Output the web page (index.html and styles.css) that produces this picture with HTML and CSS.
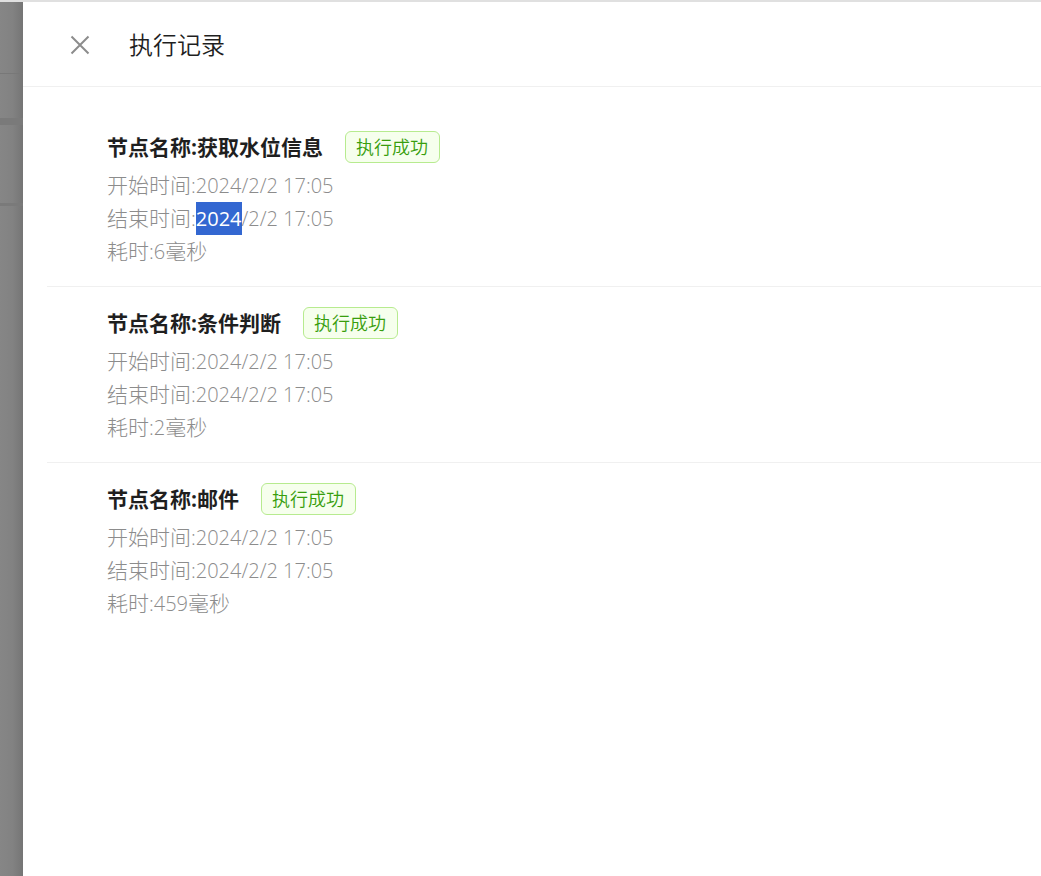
FILE: index.html
```html
<!DOCTYPE html>
<html lang="zh-CN">
<head>
<meta charset="utf-8">
<meta name="viewport" content="width=device-width, initial-scale=1">
<title>执行记录</title>
<link rel="stylesheet" href="styles.css">
</head>
<body>
<div class="screen">
  <div class="backdrop">
    <div class="backdrop-header"></div>
    <div class="backdrop-toolbar"></div>
    <div class="backdrop-row"></div>
  </div>
  <main class="drawer">
    <header class="drawer-header">
      <button class="close" type="button" aria-label="关闭">
        <svg width="20" height="20" viewBox="0 0 20 20" fill="none" stroke="currentColor" stroke-width="2"><path d="M1.5 1.5l17 17M18.5 1.5l-17 17"/></svg>
      </button>
      <h1 class="drawer-title">执行记录</h1>
    </header>
    <ul class="records">
      <li class="record">
        <div class="record-head"><h2 class="record-name">节点名称:获取水位信息</h2><span class="tag">执行成功</span></div>
        <p class="line">开始时间<span class="value">:2024/2/2 17:05</span></p>
        <p class="line">结束时间<span class="value">:<mark class="selected">2024</mark>/2/2 17:05</span></p>
        <p class="line">耗时<span class="value">:6</span>毫秒</p>
      </li>
      <li class="record">
        <div class="record-head"><h2 class="record-name">节点名称:条件判断</h2><span class="tag">执行成功</span></div>
        <p class="line">开始时间<span class="value">:2024/2/2 17:05</span></p>
        <p class="line">结束时间<span class="value">:2024/2/2 17:05</span></p>
        <p class="line">耗时<span class="value">:2</span>毫秒</p>
      </li>
      <li class="record">
        <div class="record-head"><h2 class="record-name">节点名称:邮件</h2><span class="tag">执行成功</span></div>
        <p class="line">开始时间<span class="value">:2024/2/2 17:05</span></p>
        <p class="line">结束时间<span class="value">:2024/2/2 17:05</span></p>
        <p class="line">耗时<span class="value">:459</span>毫秒</p>
      </li>
    </ul>
  </main>
</div>
</body>
</html>
```
FILE: styles.css
```css
* { box-sizing: border-box; }

body {
  margin: 0;
  font-family: "Open Sans", "Noto Sans CJK SC", sans-serif;
  color: #1f1f1f;
  background: #fff;
}

h1, h2, p, ul { margin: 0; padding: 0; }

.screen {
  display: flex;
  min-height: 100vh;
  border-top: 2px solid #e0e0e0;
}

.backdrop {
  flex: 0 0 23px;
  background: linear-gradient(to right, #868686, #828282 55%, #757575);
}

.backdrop-header {
  height: 72px;
  border-bottom: 1px solid #787878;
}

.backdrop-toolbar {
  height: 51px;
  border-bottom: 7px solid #7a7a7a;
}

.backdrop-row {
  height: 81px;
  border-bottom: 3px solid #7a7a7a;
}

.drawer {
  flex: 1;
  min-width: 0;
  background: #fff;
}

.drawer-header {
  display: flex;
  align-items: center;
  gap: 39px;
  height: 85px;
  padding: 2px 24px 0 47px;
  border-bottom: 1px solid #f0f0f0;
}

.close {
  display: flex;
  padding: 0;
  border: 0;
  background: none;
  color: #8c8c8c;
  cursor: pointer;
}

.drawer-title {
  font-size: 24px;
  font-weight: 350;
  line-height: 36px;
}

.records {
  padding: 24px 0 24px 24px;
  list-style: none;
}

.record {
  padding: 20px 24px 18px 60px;
}

.record + .record { border-top: 1px solid #f0f0f0; }

.record-head {
  display: flex;
  align-items: center;
  gap: 22px;
  margin-bottom: 6px;
}

.record-name {
  font-size: 21px;
  font-weight: 700;
  line-height: 32px;
}

.tag {
  padding: 0 11px 0 10px;
  border: 1px solid #b7eb8f;
  border-radius: 6px;
  background: #f6ffed;
  color: #389e0d;
  font-size: 18px;
  font-weight: 350;
  line-height: 30px;
}

.line {
  color: #8c8c8c;
  font-size: 21px;
  font-weight: 300;
  line-height: 33px;
}

.value {
  font-size: 20px;
  font-weight: 350;
}

.selected {
  display: inline-block;
  background: #3367d1;
  color: #fff;
  font-weight: 400;
}
```
